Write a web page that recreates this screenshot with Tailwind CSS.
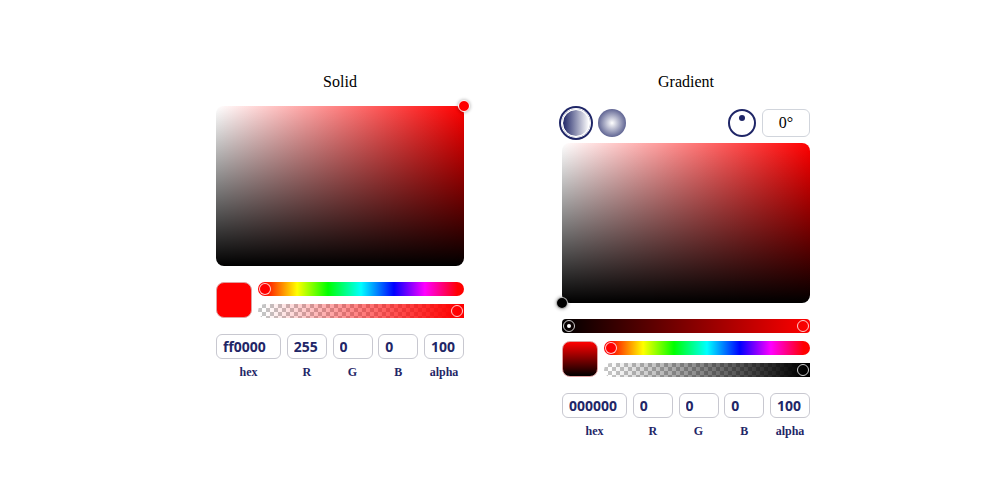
<!DOCTYPE html>
<html lang="en">

<head>
  <meta charset="UTF-8" />
  <meta name="viewport" content="width=device-width, initial-scale=1.0" />
  <title>Color Picker</title>
  <script src="https://cdn.jsdelivr.net/npm/@tailwindcss/browser@4"></script>
</head>

<body class="bg-white text-black font-['Liberation_Serif',serif]">
  <main class="flex flex-wrap justify-center items-start gap-x-[98px] gap-y-8 pl-[26px] pt-[70px]">

    <!-- Solid -->
    <section class="w-[248px]">
      <h2 class="text-base leading-6 text-center mb-3">Solid</h2>

      <div class="relative h-40 rounded-lg bg-[linear-gradient(to_top,#000,transparent),linear-gradient(to_right,#fff,#f00)]">
        <button type="button" aria-label="Color point"
          class="absolute -top-1.5 -right-1.5 size-3 rounded-full border border-white bg-[#f00] shadow-[0_0_3px_1px_rgba(0,0,0,0.2)]"></button>
      </div>

      <div class="flex gap-1.5 mt-4">
        <div class="size-9 rounded-lg border border-[#e0a0a0] bg-[#f00]"></div>
        <div class="flex-1 flex flex-col gap-2">
          <input type="range" min="0" max="360" value="0" aria-label="Hue"
            class="block appearance-none w-full h-3.5 px-px rounded-full bg-[linear-gradient(to_right,#f00_3%,#ff0_19%,#0f0_34%,#0ff_50%,#00f_66%,#f0f_81%,#f00_97%)] [&::-webkit-slider-thumb]:appearance-none [&::-webkit-slider-thumb]:size-3 [&::-webkit-slider-thumb]:rounded-full [&::-webkit-slider-thumb]:border [&::-webkit-slider-thumb]:border-white/80 [&::-webkit-slider-thumb]:bg-[#f00]" />
          <input type="range" min="0" max="100" value="100" aria-label="Alpha"
            class="block appearance-none w-full h-3.5 px-px rounded-l-full bg-[linear-gradient(to_right,transparent_3%,#f00_97%),repeating-conic-gradient(#c4c4c4_0_25%,#fff_0_50%)] bg-[length:100%_100%,8px_8px] [&::-webkit-slider-thumb]:appearance-none [&::-webkit-slider-thumb]:size-3 [&::-webkit-slider-thumb]:rounded-full [&::-webkit-slider-thumb]:border [&::-webkit-slider-thumb]:border-white/80" />
        </div>
      </div>

      <div class="flex justify-between mt-4 text-xs font-bold text-[#1f2667]">
        <label class="w-[65px] text-center">
          <input type="text" value="ff0000" class="block w-full h-[25px] mb-[5px] px-1.5 rounded-md border border-[#c8c8d0] text-sm font-bold font-['Noto_Sans',sans-serif]" />hex
        </label>
        <label class="w-10 text-center">
          <input type="text" value="255" class="block w-full h-[25px] mb-[5px] px-1.5 rounded-md border border-[#c8c8d0] text-sm font-bold font-['Noto_Sans',sans-serif]" />R
        </label>
        <label class="w-10 text-center">
          <input type="text" value="0" class="block w-full h-[25px] mb-[5px] px-1.5 rounded-md border border-[#c8c8d0] text-sm font-bold font-['Noto_Sans',sans-serif]" />G
        </label>
        <label class="w-10 text-center">
          <input type="text" value="0" class="block w-full h-[25px] mb-[5px] px-1.5 rounded-md border border-[#c8c8d0] text-sm font-bold font-['Noto_Sans',sans-serif]" />B
        </label>
        <label class="w-10 text-center">
          <input type="text" value="100" class="block w-full h-[25px] mb-[5px] px-1.5 rounded-md border border-[#c8c8d0] text-sm font-bold font-['Noto_Sans',sans-serif]" />alpha
        </label>
      </div>
    </section>

    <!-- Gradient -->
    <section class="w-[248px]">
      <h2 class="text-base leading-6 text-center mb-[15px]">Gradient</h2>

      <div class="flex items-center gap-2 mb-1.5">
        <button type="button" aria-label="Linear gradient"
          class="size-7 rounded-full border border-white bg-clip-padding bg-[linear-gradient(to_right,#1f2667,#fff)] ring-2 ring-[#1f2667] ring-offset-1"></button>
        <button type="button" aria-label="Radial gradient"
          class="size-7 rounded-full bg-[radial-gradient(circle,#fff,#1f2667)]"></button>
        <button type="button" aria-label="Gradient angle"
          class="ml-auto size-7 rounded-full border-2 border-[#1f2667] flex justify-center items-start pt-1">
          <span class="size-1.5 rounded-full bg-[#1f2667]"></span>
        </button>
        <input type="text" value="0°" aria-label="Degrees"
          class="w-12 h-7 -ml-0.5 rounded-md border border-gray-300 text-base text-center" />
      </div>

      <div class="relative h-40 rounded-lg bg-[linear-gradient(to_top,#000,transparent),linear-gradient(to_right,#fff,#f00)]">
        <button type="button" aria-label="Color point"
          class="absolute -bottom-1.5 -left-1.5 size-3 rounded-full border border-white/70 bg-black shadow-[0_0_3px_1px_rgba(0,0,0,0.2)]"></button>
      </div>

      <div class="flex justify-between items-center h-3.5 mt-4 px-px rounded-sm bg-[linear-gradient(to_right,#000,#f00)]">
        <button type="button" aria-label="First stop" class="size-3 rounded-full border border-white/80 flex justify-center items-center">
          <span class="size-1 rounded-full bg-white"></span>
        </button>
        <button type="button" aria-label="Last stop" class="size-3 rounded-full border border-white/80"></button>
      </div>

      <div class="flex gap-1.5 mt-2">
        <div class="size-9 rounded-lg border border-[#e0a0a0] bg-[linear-gradient(to_top,#000,#f00)]"></div>
        <div class="flex-1 flex flex-col gap-2">
          <input type="range" min="0" max="360" value="0" aria-label="Hue"
            class="block appearance-none w-full h-3.5 px-px rounded-full bg-[linear-gradient(to_right,#f00_3%,#ff0_19%,#0f0_34%,#0ff_50%,#00f_66%,#f0f_81%,#f00_97%)] [&::-webkit-slider-thumb]:appearance-none [&::-webkit-slider-thumb]:size-3 [&::-webkit-slider-thumb]:rounded-full [&::-webkit-slider-thumb]:border [&::-webkit-slider-thumb]:border-white/80 [&::-webkit-slider-thumb]:bg-[#f00]" />
          <input type="range" min="0" max="100" value="100" aria-label="Alpha"
            class="block appearance-none w-full h-3.5 px-px rounded-l-full bg-[linear-gradient(to_right,transparent_3%,#000_97%),repeating-conic-gradient(#c4c4c4_0_25%,#fff_0_50%)] bg-[length:100%_100%,8px_8px] [&::-webkit-slider-thumb]:appearance-none [&::-webkit-slider-thumb]:size-3 [&::-webkit-slider-thumb]:rounded-full [&::-webkit-slider-thumb]:border [&::-webkit-slider-thumb]:border-white/80" />
        </div>
      </div>

      <div class="flex justify-between mt-4 text-xs font-bold text-[#1f2667]">
        <label class="w-[65px] text-center">
          <input type="text" value="000000" class="block w-full h-[25px] mb-[5px] px-1.5 rounded-md border border-[#c8c8d0] text-sm font-bold font-['Noto_Sans',sans-serif]" />hex
        </label>
        <label class="w-10 text-center">
          <input type="text" value="0" class="block w-full h-[25px] mb-[5px] px-1.5 rounded-md border border-[#c8c8d0] text-sm font-bold font-['Noto_Sans',sans-serif]" />R
        </label>
        <label class="w-10 text-center">
          <input type="text" value="0" class="block w-full h-[25px] mb-[5px] px-1.5 rounded-md border border-[#c8c8d0] text-sm font-bold font-['Noto_Sans',sans-serif]" />G
        </label>
        <label class="w-10 text-center">
          <input type="text" value="0" class="block w-full h-[25px] mb-[5px] px-1.5 rounded-md border border-[#c8c8d0] text-sm font-bold font-['Noto_Sans',sans-serif]" />B
        </label>
        <label class="w-10 text-center">
          <input type="text" value="100" class="block w-full h-[25px] mb-[5px] px-1.5 rounded-md border border-[#c8c8d0] text-sm font-bold font-['Noto_Sans',sans-serif]" />alpha
        </label>
      </div>
    </section>

  </main>
</body>

</html>
